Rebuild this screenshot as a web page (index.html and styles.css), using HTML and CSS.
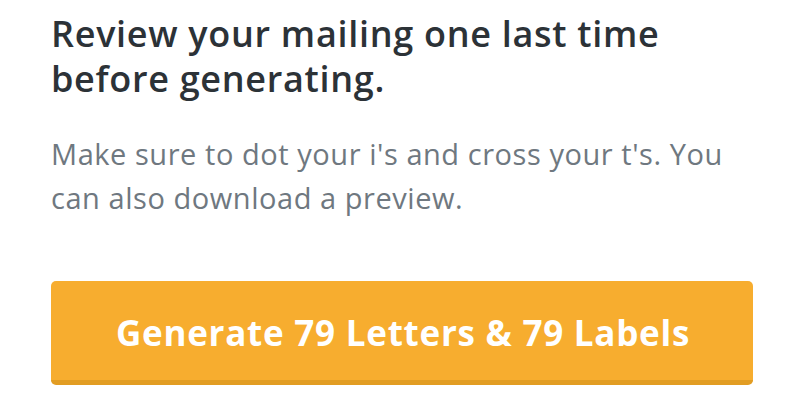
FILE: index.html
```html
<!DOCTYPE html>
<html>
<head>
<meta charset="utf-8">
<link rel="stylesheet" href="styles.css">
</head>
<body>
<div class="panel">
  <h1 class="title">Review your mailing one last time before generating.</h1>
  <p class="lead">Make sure to dot your i's and cross your t's. You can also download a preview.</p>
  <button class="generate">Generate 79 Letters &amp; 79 Labels</button>
</div>
</body>
</html>
```

FILE: styles.css
```css
html, body {
  margin: 0;
  padding: 0;
  background: #fff;
}
.panel {
  width: 702px;
  padding: 11px 0 0 51px;
  font-family: "Open Sans", "Noto Sans", sans-serif;
}
.title {
  margin: 0;
  font-size: 36px;
  font-weight: 600;
  line-height: 45px;
  letter-spacing: 0.7px;
  color: #2c3237;
}
.lead {
  margin: 31px 0 0 0;
  font-size: 29px;
  line-height: 44px;
  letter-spacing: 0.55px;
  color: #6f7880;
}
.generate {
  display: block;
  margin-top: 61px;
  width: 702px;
  height: 104px;
  border: none;
  border-bottom: 5px solid #e29d23;
  border-radius: 5px;
  background: #f7ad2f;
  color: #fff;
  font-family: "Open Sans", "Noto Sans", sans-serif;
  font-size: 35px;
  font-weight: 700;
  letter-spacing: 0.75px;
  padding: 3px 0 0 2px;
}
```
